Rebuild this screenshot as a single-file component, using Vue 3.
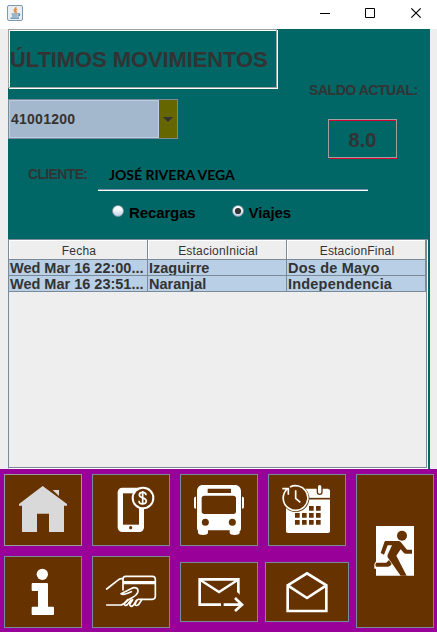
<script setup>
import { ref } from 'vue'

const card = ref('41001200')
const client = ref('JOSÉ RIVERA VEGA')
const balance = ref('8.0')
const mode = ref('Viajes')
const modes = ['Recargas', 'Viajes']
const headers = ['Fecha', 'EstacionInicial', 'EstacionFinal']
const trips = [
  ['Wed Mar 16 22:00...', 'Izaguirre', 'Dos de Mayo'],
  ['Wed Mar 16 23:51...', 'Naranjal', 'Independencia'],
]
</script>

<template>
  <div class="window">
    <header class="titlebar">
      <svg class="java" viewBox="0 0 16 16">
        <rect x=".5" y=".5" width="15" height="15" rx="1.5" fill="#e9eef2" stroke="#7f99ad" />
        <path d="M8.8 2c.8 1.400-2.600 2.300-1.500 4.100L8.300 7.600M10.200 4c-2 .8-1.800 1.600-1 2.600.3.500 0 1-.4 1.300" fill="none" stroke="#e58a3c" stroke-width="1.300" />
        <path d="M4.500 9h6.300M5 11h5.300M3.500 13.200h8.500M11 8.800c2.500-.2 2 2-.3 2.300" fill="none" stroke="#4f7fa3" stroke-width="1.200" />
      </svg>
      <svg class="controls" viewBox="0 0 118 29">
        <path d="M1 13.500h10" fill="none" stroke="#000" />
        <path d="M46.500 8.500h9v9h-9z" fill="none" stroke="#000" />
        <path d="M92.300 8.300l9.400 9.400m0-9.400l-9.400 9.400" fill="none" stroke="#000" stroke-width="1.200" />
      </svg>
    </header>

    <main class="panel">
      <section class="summary">
        <div class="left">
          <h1 class="heading"><span>ÚLTIMOS MOVIMIENTOS</span></h1>
          <div class="combo">
            <span class="combo-value">{{ card }}</span>
            <span class="combo-button"><svg viewBox="0 0 10 5"><path d="M0 0h10L5 5z" fill="#333" /></svg></span>
          </div>
        </div>
        <div class="balance">
          <span class="balance-label">SALDO ACTUAL:</span>
          <span class="balance-value">{{ balance }}</span>
        </div>
      </section>

      <section class="client">
        <span class="client-label">CLIENTE:</span>
        <span class="client-name">{{ client }}</span>
      </section>

      <section class="modes">
        <label v-for="m in modes" :key="m" class="mode" @click="mode = m">
          <svg viewBox="0 0 12 12">
            <defs>
              <linearGradient :id="'g' + m" x1="0" y1="0" x2="0" y2="1">
                <stop offset="0" stop-color="#fff" /><stop offset=".4" stop-color="#f4f8fc" /><stop offset="1" stop-color="#b8cfe5" />
              </linearGradient>
            </defs>
            <circle cx="6" cy="6" r="5.500" :fill="`url(#g${m})`" stroke="#7a8a99" stroke-width=".8" />
            <circle v-if="mode === m" cx="6" cy="6" r="3.100" fill="#333" />
          </svg>
          <span>{{ m }}</span>
        </label>
      </section>

      <section class="table">
        <div class="row head">
          <span v-for="h in headers" :key="h" class="cell">{{ h }}</span>
        </div>
        <div v-for="trip in trips" :key="trip[0]" class="row">
          <span v-for="value in trip" :key="value" class="cell">{{ value }}</span>
        </div>
      </section>
    </main>

    <nav class="toolbar">
      <div class="tools">
        <div class="tool-row">
          <button class="tool home">
            <svg viewBox="15 60 228 210" fill="#d9d9d9">
              <path d="M128 93L57 147v5h9v79h45v-55h36v55h45v-79h9v-5z" />
              <path d="M158 105h19v18z" />
            </svg>
          </button>
          <button class="tool">
            <svg viewBox="279 60 228 210" fill="#fff">
              <rect x="353" y="98" width="79" height="133" rx="14" />
              <path fill="#663300" d="M369 115h48v94h-48z" />
              <circle cx="392" cy="218" r="5" fill="#663300" />
              <circle cx="429" cy="129" r="34" fill="#fff" />
              <circle cx="429" cy="129" r="28" fill="#663300" />
              <path d="M438 121c0-12-20-11-20-1 0 11 21 6 21 18 0 12-22 11-22-1M428 108v41" fill="none" stroke="#fff" stroke-width="5" />
            </svg>
          </button>
          <button class="tool">
            <svg viewBox="33 60 228 210" fill="#fff">
              <path d="M98 90h97c10 0 18 8 18 18v112c0 4-1 7-4 9v4c0 9-30 9-30 0v-7h-65v7c0 9-30 9-30 0v-6c-2-2-3-4-3-7V108c0-10 7-18 17-18z" />
              <path d="M78 125c-4 0-6 2-6 5v26c0 3 2 5 6 5zM216 125c4 0 6 2 6 5v26c0 3-2 5-6 5z" />
              <g fill="#663300">
                <rect x="113" y="101" width="70" height="13" rx="1" />
                <rect x="95" y="122" width="103" height="55" rx="8" />
                <circle cx="106" cy="202" r="10.500" />
                <circle cx="187" cy="202" r="10.500" />
              </g>
            </svg>
          </button>
          <button class="tool">
            <svg viewBox="297 60 228 210" fill="#fff">
              <path d="M400 101h73c4 0 7 3 7 6v121c0 3-2 6-6 6H354c-4 0-6-3-6-6v-80h52z" />
              <path d="M408 131h72" stroke="#663300" stroke-width="5" />
              <path d="M449 96v15" stroke="#663300" stroke-width="18" stroke-linecap="round" />
              <path d="M449 95v16" stroke="#fff" stroke-width="10" stroke-linecap="round" />
              <circle cx="377" cy="130" r="41" fill="#663300" />
              <path d="M360 96a37 37 0 1 1-5 63M355 159c-17-12-22-37-4-57M337 101h18v18M377 106v24l14 12" fill="none" stroke="#fff" stroke-width="5" />
              <path fill="#663300" d="M417 153h14v14h-14zM438 153h14v14h-14zM375 174h14v14h-14zM396 174h14v14h-14zM417 174h14v14h-14zM438 174h14v14h-14zM375 195h14v14h-14zM396 195h14v14h-14zM417 195h14v14h-14zM438 195h14v14h-14z" />
            </svg>
          </button>
        </div>
        <div class="tool-row">
          <button class="tool">
            <svg viewBox="15 306 228 210" fill="#fff">
              <circle cx="127" cy="358" r="17" />
              <path d="M98 384h43c2 0 3 1 3 3v68h15c2 0 3 1 3 3v19c0 2-1 3-3 3H98c-2 0-3-1-3-3v-19c0-2 1-3 3-3h16v-47H98c-2 0-3-1-3-3v-18c0-2 1-3 3-3z" />
            </svg>
          </button>
          <button class="tool">
            <svg viewBox="279 306 228 210">
              <path fill="#fff" d="M369 378h97v10h-97z" />
              <g fill="none" stroke="#fff" stroke-width="5" stroke-linecap="round" stroke-linejoin="round">
                <path d="M369 405v-33c0-5 3-8 8-8h80c5 0 9 4 9 9v51c0 5-4 9-9 9h-42" />
                <path d="M320 402l36-28c4-3 8-4 12-3M320 450h42c8 0 14-8 21-14 8-7 31-12 31-28 0-11-11-12-21-7l-30 15c4 4 13 2 22-2l9-4" />
                <path d="M383 434l-9 10c-5 7 4 9 9 4l10-13M398 434l-8 12c-3 8 6 10 10 5l9-15M412 434l-7 13c0 7 9 5 12 0l9-14" />
              </g>
            </svg>
          </button>
          <button class="tool mail">
            <svg viewBox="33 324 228 174" fill="none" stroke="#fff" stroke-width="8">
              <path d="M153 449H89v-76h116v39" />
              <path d="M91 375l56 36 56-36" stroke-width="7" />
              <path d="M161 449h56M195 429l21 20-21 19" />
              <path d="M201 410l8 9v-9z" fill="#fff" stroke="none" />
            </svg>
          </button>
          <button class="tool open">
            <svg viewBox="288 324 246 174" fill="none" stroke="#fff" stroke-width="8">
              <path d="M353 391l58-36 58 36v77H353z" />
              <path d="M353 391l58 38 58-38" />
            </svg>
          </button>
        </div>
      </div>
      <button class="tool exit">
        <svg viewBox="51 60 228 456">
          <g transform="translate(90 195)" fill="#663300">
            <path fill="#fff" d="M18 18h114v149H18zM18 124l-5 8v14h5z" />
            <circle cx="96" cy="47" r="15" />
            <path d="M48 63h37c4 0 6 2 9 5l17 21h15v12h-18c-3 0-5-1-7-3l-9-10-13 19 31 60H92L53 112c-1-3-1-5 0-8l13-28H53L42 104l-10-5 11-32c1-3 2-4 5-4z" />
            <path d="M20 128h29l8-8 8 12-5 6-6 2H20c-5-1-5-11 0-12z" />
          </g>
        </svg>
      </button>
    </nav>
  </div>
</template>

<style>
body { margin: 0; }
</style>

<style scoped>
.window {
  width: 437px; height: 632px; display: flex; flex-direction: column; overflow: hidden;
  background: #eee; color: #333; font-family: "Liberation Sans", Arial, sans-serif;
}
.window * { box-sizing: border-box; }
span { white-space: nowrap; }
svg { display: block; flex: none; }
.titlebar { height: 29px; flex: none; background: #fff; display: flex; justify-content: space-between; }
.java { width: 16px; height: 16px; margin: 5px 0 0 7px; }
.controls { width: 118px; height: 29px; }
.panel { width: 422px; height: 440px; flex: none; margin-left: 8px; background: #006666; }
.summary { display: flex; height: 129px; }
.left { width: 270px; }
.heading {
  margin: 0; width: 269px; height: 59px; border: 1px solid #a0a0a0;
  box-shadow: 1px 1px 0 #fff, inset 1px 1px 0 #fff;
  display: flex; align-items: center; padding: 3px 0 0 1px; font-size: 22px; line-height: 26px; letter-spacing: -.1px;
}
.combo { display: flex; width: 170px; height: 40px; margin-top: 11px; border: 1px solid #7a8a99; }
.combo-value {
  width: 150px; border: 1px solid #b8cfe5; background: #a3b8cc; padding-left: 1px;
  line-height: 37px; font-weight: bold; font-size: 14px; letter-spacing: .25px;
}
.combo-button { flex: 1; background: #666600; display: flex; align-items: center; justify-content: center; }
.combo-button svg { width: 10px; height: 5px; margin-top: 1px; }
.balance { padding: 53px 0 0 31px; }
.balance-label { display: block; font-size: 14px; line-height: 17px; font-weight: bold; letter-spacing: -.45px; }
.balance-value {
  display: block; margin: 20px 0 0 19px; width: 69px; height: 39px; border: 1px solid #a0a0a0;
  box-shadow: 1px 1px 0 #d4002f, inset 1px 1px 0 #d4002f;
  text-align: center; font-weight: bold; font-size: 20px; line-height: 40px;
}
.client { height: 33px; display: flex; }
.client-label { width: 90px; padding: 8px 0 0 20px; font-weight: bold; font-size: 14px; line-height: 16px; letter-spacing: -.65px; }
.client-name {
  width: 270px; padding: 8px 0 0 11px; border-bottom: 1px solid #fff; box-shadow: inset 0 -1px 0 #7a8fa8;
  color: #000; font-family: Lato, sans-serif; font-weight: bold; font-size: 14px; line-height: 18px;
}
.modes { display: flex; height: 48px; padding: 13px 0 0 104px; gap: 36px; }
.mode { display: flex; gap: 5px; height: 17px; color: #000; font-weight: bold; font-size: 15px; line-height: 17px; letter-spacing: -.12px; }
.mode svg { width: 12px; height: 12px; margin-top: 1px; }
.table { width: 420px; height: 230px; background: #eee; border: 1px solid #7a8a99; border-right: 0; border-bottom: 1px solid #fff; box-shadow: inset -1px 0 0 #fff, inset -2px 0 0 #7a8a99, inset 0 -1px 0 #7a8a99; }
.row { display: grid; grid-template-columns: repeat(3, 139px); height: 16px; width: 417px; }
.cell {
  border-right: 1px solid #7a8a99; border-bottom: 1px solid #7a8a99; background: #b8cfe5;
  padding-left: 1px; font-weight: bold; font-size: 14.500px; line-height: 16px; overflow: hidden;
}
.cell:last-child { letter-spacing: .2px; }
.head { height: 20px; }
.head .cell { background: #eee; box-shadow: inset 1px 1px 0 #fff; padding-left: 2px; text-align: center; font-weight: normal; font-size: 12px; line-height: 22px; letter-spacing: .2px; }
.toolbar { height: 163px; flex: none; background: #990099; display: flex; padding: 5px 3px 4px 4px; }
.tools { width: 352px; display: flex; flex-direction: column; gap: 10px; }
.tool-row { display: flex; gap: 10px; }
.tool { width: 78px; height: 72px; padding: 0; border: 1px solid #7a8a99; background: #663300; border-radius: 0; flex: none; }
.tool svg { width: 100%; height: 100%; }
.home { border-color: #999; }
.mail { height: 60px; margin-top: 6px; }
.open { width: 84px; height: 60px; margin: 6px 0 0 -3px; }
.exit { height: 154px; }
</style>
